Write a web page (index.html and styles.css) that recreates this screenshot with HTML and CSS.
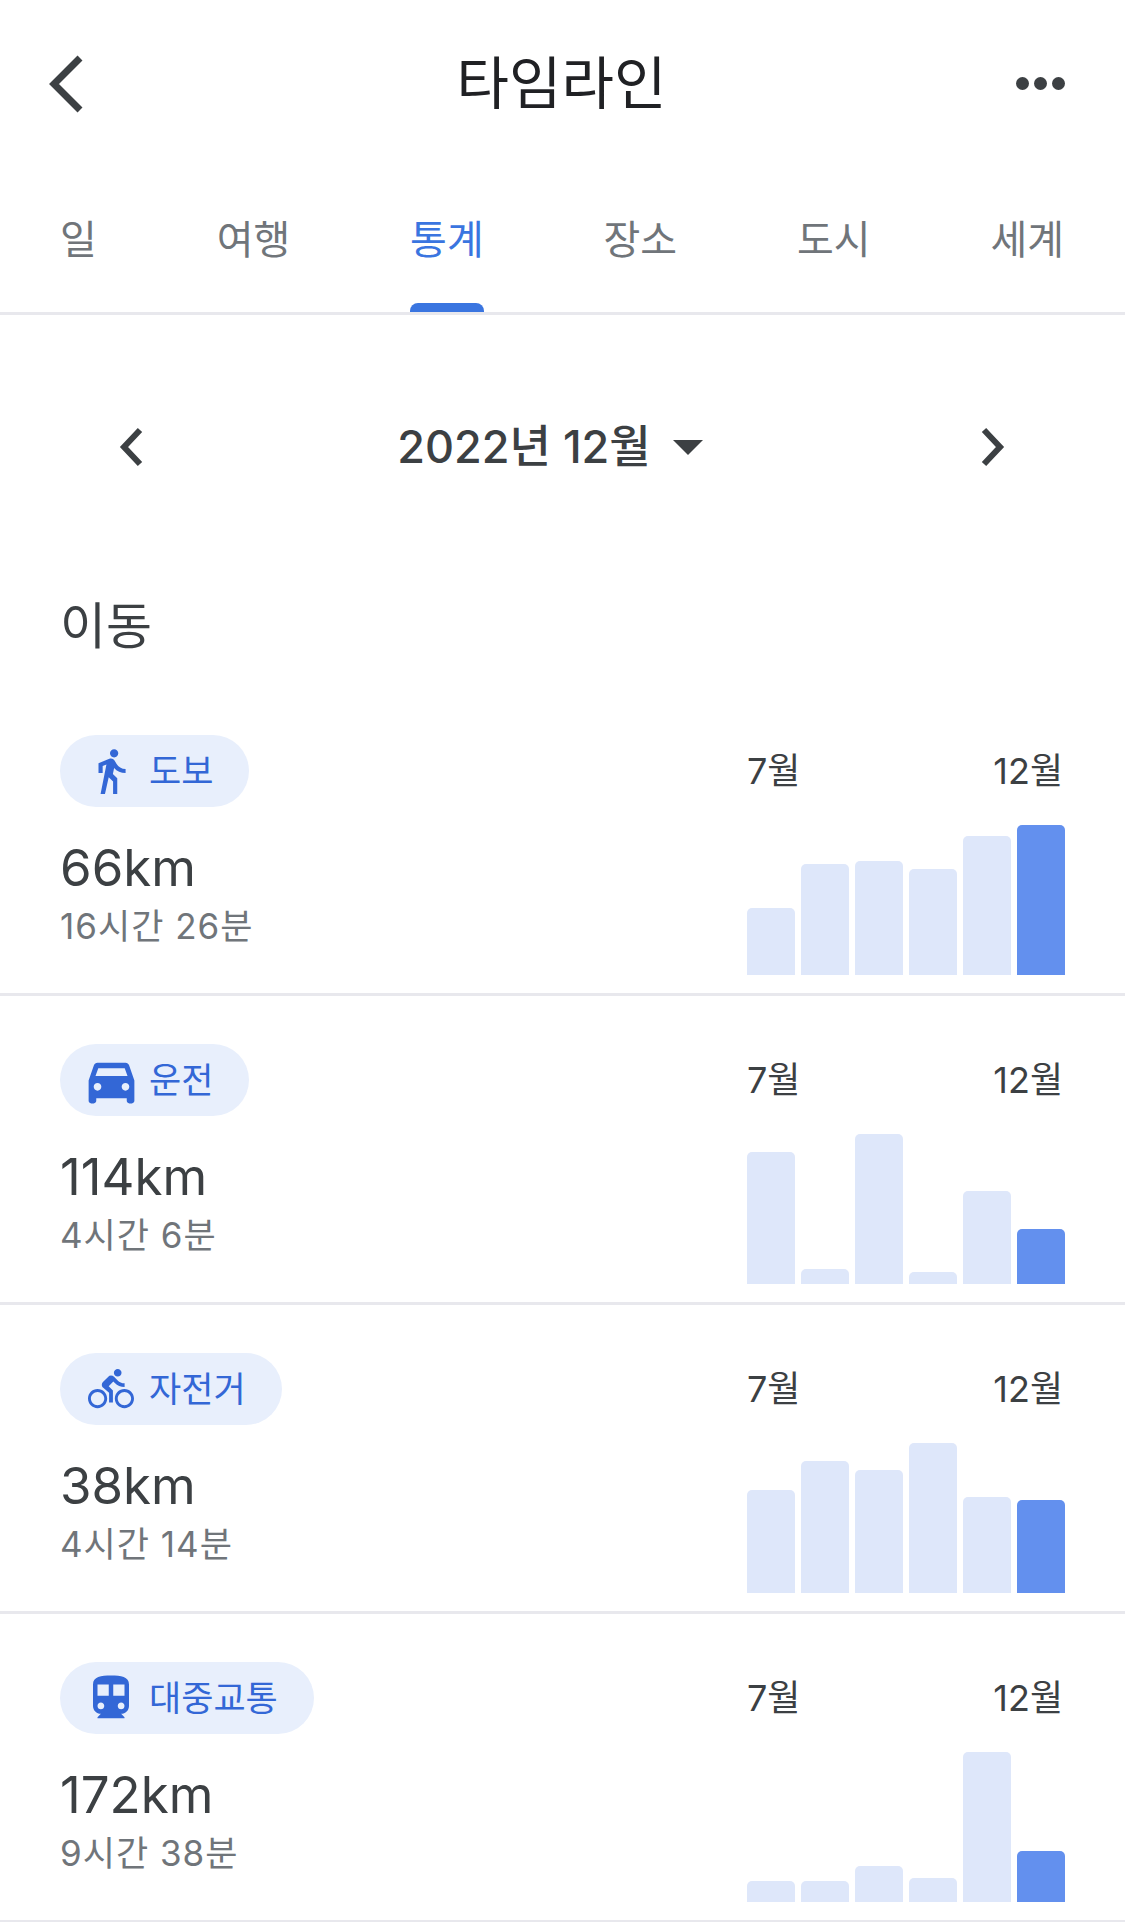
FILE: index.html
```html
<!DOCTYPE html>
<html lang="ko">
<head>
    <meta charset="UTF-8">
    <meta name="viewport" content="width=device-width, initial-scale=1.0">
    <title>타임라인</title>
    <link rel="stylesheet" href="styles.css">
</head>
<body>

<header class="topbar">
    <svg class="back" width="35" height="58" viewBox="0 0 35 58"><path d="M32 3 L6 29 L32 55" /></svg>
    <h1>타임라인</h1>
    <div class="dots"><span></span><span></span><span></span></div>
</header>

<nav class="tabs">
    <a class="tab">일</a>
    <a class="tab">여행</a>
    <a class="tab active">통계</a>
    <a class="tab">장소</a>
    <a class="tab">도시</a>
    <a class="tab">세계</a>
</nav>

<div class="month">
    <svg class="chev" width="24" height="40" viewBox="0 0 24 40"><path d="M21 3 L5 20 L21 37" /></svg>
    <div class="month-label"><span class="month-text">2022년 12월</span> <span class="caret"></span></div>
    <svg class="chev" width="24" height="40" viewBox="0 0 24 40"><path d="M3 3 L19 20 L3 37" /></svg>
</div>

<h2 class="section-title">이동</h2>

<section class="stat">
    <div class="stat-info">
        <div class="pill">
            <span class="pill-icon"><svg width="50" height="50" viewBox="0 0 24 24"><path d="M13.5 5.5c1.1 0 2-.9 2-2s-.9-2-2-2-2 .9-2 2 .9 2 2 2zM9.8 8.9L7 23h2.1l1.8-8 2.1 2v6h2v-7.5l-2.1-2 .6-3C14.8 12 16.8 13 19 13v-2c-1.9 0-3.5-1-4.3-2.4l-1-1.6c-.4-.6-1-1-1.7-1-.3 0-.5.1-.8.1L6 8.3V13h2V9.6l1.8-.7"/></svg></span>
            <span class="pill-text">도보</span>
        </div>
        <div class="distance">66km</div>
        <div class="duration">16시간 26분</div>
    </div>
    <div class="chart">
        <div class="chart-labels"><span>7월</span><span>12월</span></div>
        <div class="bars">
            <div class="bar" style="height: 67px"></div>
            <div class="bar" style="height: 111px"></div>
            <div class="bar" style="height: 114px"></div>
            <div class="bar" style="height: 106px"></div>
            <div class="bar" style="height: 139px"></div>
            <div class="bar current" style="height: 150px"></div>
        </div>
    </div>
</section>

<section class="stat">
    <div class="stat-info">
        <div class="pill">
            <span class="pill-icon"><svg width="61" height="61" viewBox="0 0 24 24"><path d="M18.92 6.01C18.72 5.42 18.16 5 17.5 5h-11c-.66 0-1.21.42-1.42 1.01L3 12v8c0 .55.45 1 1 1h1c.55 0 1-.45 1-1v-1h12v1c0 .55.45 1 1 1h1c.55 0 1-.45 1-1v-8l-2.08-5.99zM6.5 16c-.83 0-1.5-.67-1.5-1.5S5.67 13 6.5 13s1.5.67 1.5 1.5S7.33 16 6.5 16zm11 0c-.83 0-1.5-.67-1.5-1.5s.67-1.5 1.5-1.5 1.5.67 1.5 1.5-.67 1.5-1.5 1.5zM5.7 10.2L6.8 7.2h10.4l1.1 3H5.7z"/></svg></span>
            <span class="pill-text">운전</span>
        </div>
        <div class="distance">114km</div>
        <div class="duration">4시간 6분</div>
    </div>
    <div class="chart">
        <div class="chart-labels"><span>7월</span><span>12월</span></div>
        <div class="bars">
            <div class="bar" style="height: 132px"></div>
            <div class="bar" style="height: 15px"></div>
            <div class="bar" style="height: 150px"></div>
            <div class="bar" style="height: 12px"></div>
            <div class="bar" style="height: 93px"></div>
            <div class="bar current" style="height: 55px"></div>
        </div>
    </div>
</section>

<section class="stat">
    <div class="stat-info">
        <div class="pill">
            <span class="pill-icon"><svg width="46" height="46" viewBox="0 0 24 24"><path d="M15.5 5.5c1.1 0 2-.9 2-2s-.9-2-2-2-2 .9-2 2 .9 2 2 2zM5 12c-2.8 0-5 2.2-5 5s2.2 5 5 5 5-2.2 5-5-2.2-5-5-5zm0 8.5c-1.9 0-3.5-1.6-3.5-3.5s1.6-3.5 3.5-3.5 3.5 1.6 3.5 3.5-1.6 3.5-3.5 3.5zm5.8-10l2.4-2.4.8.8c1.3 1.3 3 2.1 5.1 2.1V9c-1.5 0-2.7-.6-3.6-1.5l-1.9-1.9c-.5-.4-1-.6-1.6-.6s-1.1.2-1.4.6L7.8 8.4c-.4.4-.6.9-.6 1.4 0 .6.2 1.1.6 1.4L11 14v5h2v-6.2l-2.2-2.3zM19 12c-2.8 0-5 2.2-5 5s2.2 5 5 5 5-2.2 5-5-2.2-5-5-5zm0 8.5c-1.9 0-3.5-1.6-3.5-3.5s1.6-3.5 3.5-3.5 3.5 1.6 3.5 3.5-1.6 3.5-3.5 3.5z"/></svg></span>
            <span class="pill-text">자전거</span>
        </div>
        <div class="distance">38km</div>
        <div class="duration">4시간 14분</div>
    </div>
    <div class="chart">
        <div class="chart-labels"><span>7월</span><span>12월</span></div>
        <div class="bars">
            <div class="bar" style="height: 103px"></div>
            <div class="bar" style="height: 132px"></div>
            <div class="bar" style="height: 123px"></div>
            <div class="bar" style="height: 150px"></div>
            <div class="bar" style="height: 96px"></div>
            <div class="bar current" style="height: 93px"></div>
        </div>
    </div>
</section>

<section class="stat">
    <div class="stat-info">
        <div class="pill">
            <span class="pill-icon"><svg width="54" height="54" viewBox="0 0 24 24"><path d="M12 2c-4.42 0-8 .5-8 4v9.5C4 17.43 5.57 19 7.5 19L6 20.5v.5h12v-.5L16.5 19c1.93 0 3.5-1.57 3.5-3.5V6c0-3.5-3.58-4-8-4zM7.5 17c-.83 0-1.5-.67-1.5-1.5S6.67 14 7.5 14s1.5.67 1.5 1.5S8.33 17 7.5 17zm3.5-6H6V6h5v5zm5.5 6c-.83 0-1.5-.67-1.5-1.5s.67-1.5 1.5-1.5 1.5.67 1.5 1.5-.67 1.5-1.5 1.5zm1.5-6h-5V6h5v5z"/></svg></span>
            <span class="pill-text">대중교통</span>
        </div>
        <div class="distance">172km</div>
        <div class="duration">9시간 38분</div>
    </div>
    <div class="chart">
        <div class="chart-labels"><span>7월</span><span>12월</span></div>
        <div class="bars">
            <div class="bar" style="height: 21px"></div>
            <div class="bar" style="height: 21px"></div>
            <div class="bar" style="height: 36px"></div>
            <div class="bar" style="height: 24px"></div>
            <div class="bar" style="height: 150px"></div>
            <div class="bar current" style="height: 51px"></div>
        </div>
    </div>
</section>

</body>
</html>
```

FILE: styles.css
```css
html, body {
    height: 1922px;
    overflow: hidden;
}
body {
    margin: 0;
    background-color: #fff;
    color: #3c4043;
    font-family: Inter, "Noto Sans CJK KR", sans-serif;
}
.topbar {
    height: 167px;
    padding: 0 60px 0 48px;
    display: grid;
    grid-template-columns: 1fr auto 1fr;
    align-items: center;
}
.topbar h1 {
    margin: -9px 0 0 10px;
    font-size: 57px;
    font-weight: 400;
    color: #202124;
}
.back path, .chev path {
    fill: none;
    stroke: #3c4043;
    stroke-width: 7;
}
.chev path {
    stroke-width: 6;
}
.dots {
    justify-self: end;
    display: flex;
    gap: 5px;
}
.dots span {
    width: 13px;
    height: 13px;
    border-radius: 50%;
    background-color: #3c4043;
}
.tabs {
    position: relative;
    height: 145px;
    padding: 0 61px 0 60px;
    display: flex;
    justify-content: space-between;
    border-bottom: 3px solid #e8e8ed;
}
.tab {
    position: relative;
    font-size: 40px;
    line-height: 146px;
    color: #70757a;
}
.tab.active {
    color: #3a75e0;
}
.tab.active::after {
    content: "";
    position: absolute;
    left: 0;
    right: 0;
    bottom: 0;
    height: 9px;
    border-radius: 8px 8px 0 0;
    background-color: #3a75e0;
}
.month {
    height: 264px;
    padding: 0 120px 0 119px;
    display: flex;
    align-items: center;
    justify-content: space-between;
}
.month-label {
    margin-right: 24px;
    font-size: 45px;
    font-weight: 500;
    display: flex;
    align-items: center;
    gap: 22px;
}
.month-text {
    margin-top: -8px;
}
.caret {
    width: 0;
    height: 0;
    border-left: 15px solid transparent;
    border-right: 15px solid transparent;
    border-top: 15px solid #3c4043;
}
.section-title {
    margin: 0;
    height: 108px;
    padding-left: 60px;
    font-size: 50px;
    font-weight: 400;
    line-height: 94px;
    box-sizing: border-box;
}
.stat {
    height: 309px;
    box-sizing: border-box;
    padding: 48px 60px 18px 60px;
    display: flex;
    justify-content: space-between;
    border-bottom: 3px solid #e8e8ed;
}
.pill {
    height: 72px;
    padding: 0 36px 0 28px;
    display: inline-flex;
    align-items: center;
    gap: 15px;
    border-radius: 36px;
    background-color: #e8effc;
    color: #3367d6;
    font-size: 35px;
}
.pill-text {
    margin-top: -5px;
}
.pill-icon {
    width: 46px;
    display: flex;
    justify-content: center;
}
.pill-icon svg {
    flex-shrink: 0;
    fill: #3367d6;
}
.distance {
    margin-top: 31px;
    font-size: 51px;
    line-height: 60px;
}
.duration {
    margin-top: 6px;
    font-size: 35px;
    line-height: 44px;
    letter-spacing: 1px;
    color: #70757a;
}
.chart {
    width: 318px;
    display: flex;
    flex-direction: column;
    justify-content: space-between;
}
.chart-labels {
    padding-right: 2px;
    display: flex;
    justify-content: space-between;
    font-size: 36px;
    line-height: 72px;
}
.bars {
    display: flex;
    align-items: flex-end;
    gap: 6px;
}
.bar {
    flex: 1;
    border-radius: 5px 5px 0 0;
    background-color: #dee7fa;
}
.bar.current {
    background-color: #6390ee;
}
```
